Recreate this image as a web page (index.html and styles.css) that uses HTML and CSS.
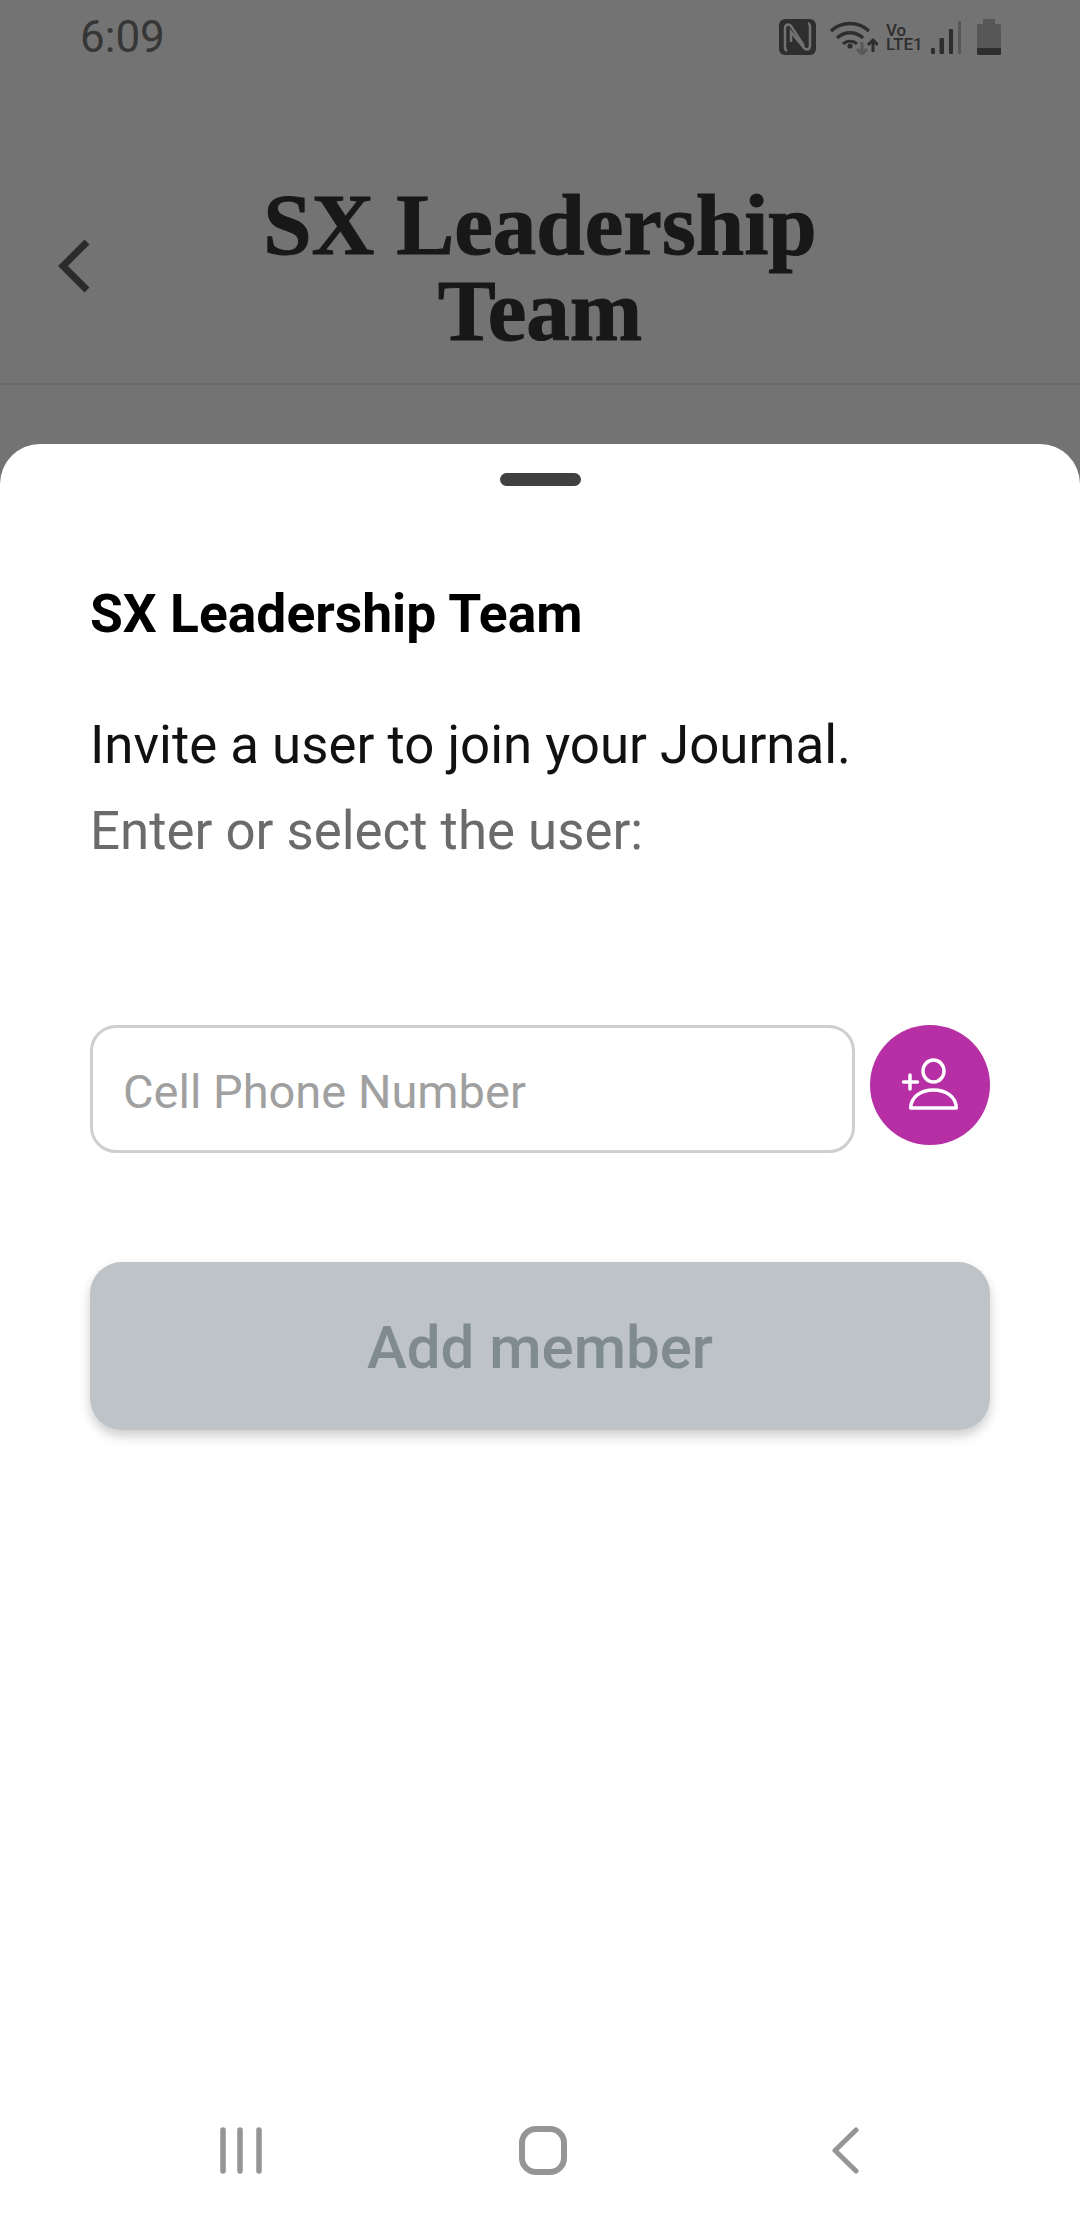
FILE: index.html
```html
<!DOCTYPE html>
<html lang="en">
<head>
    <meta charset="UTF-8">
    <meta name="viewport" content="width=device-width, initial-scale=1.0">
    <title>SX Leadership Team</title>
    <link rel="stylesheet" href="styles.css">
</head>
<body>
<div class="screen">
    <div class="status-bar">
        <span class="time">6:09</span>
        <div class="status-icons">
            <svg class="icon-nfc" width="37" height="36" viewBox="0 0 37 36">
                <rect width="37" height="36" rx="6" fill="#2e2e2e"/>
                <path d="M8 32C6 31 6 30 6 28V9C6 6 9 4 12 7L25 27" fill="none" stroke="#737373" stroke-width="2.5"/>
                <path d="M29 4C31 5 31 6 31 8V27C31 30 28 32 25 29L12 13V23" fill="none" stroke="#737373" stroke-width="2.5"/>
            </svg>
            <svg class="icon-wifi" width="48" height="35" viewBox="0 0 48 35">
                <path d="M1 11a28 28 0 0 1 38 0" fill="none" stroke="#2e2e2e" stroke-width="3.5"/>
                <path d="M7 18a19 19 0 0 1 26 0" fill="none" stroke="#2e2e2e" stroke-width="3.5"/>
                <path d="M13 24a10 10 0 0 1 14 0" fill="none" stroke="#2e2e2e" stroke-width="3"/>
                <circle cx="20" cy="26" r="2.6" fill="#2e2e2e"/>
                <path d="M32 22v12M27 29l5 5 5-5" fill="none" stroke="#575757" stroke-width="3"/>
                <path d="M43 32V20M38 25l5-5 5 5" fill="none" stroke="#2e2e2e" stroke-width="3"/>
            </svg>
            <div class="volte"><span>Vo</span><span>LTE1</span></div>
            <svg class="icon-signal" width="30" height="33" viewBox="0 0 30 33">
                <rect x="0" y="27" width="4" height="6" rx="1" fill="#2e2e2e"/>
                <rect x="8.5" y="17" width="4.5" height="16" rx="1" fill="#2e2e2e"/>
                <rect x="18" y="8" width="4" height="25" rx="1" fill="#2e2e2e"/>
                <rect x="27" y="0" width="3" height="33" rx="1" fill="#575757"/>
            </svg>
            <svg class="icon-battery" width="24" height="36" viewBox="0 0 24 36">
                <path d="M6 0h12v5h5a1 1 0 0 1 1 1v23H0V6a1 1 0 0 1 1-1h5z" fill="#575757"/>
                <path d="M0 29h24v6a1 1 0 0 1-1 1H1a1 1 0 0 1-1-1z" fill="#2e2e2e"/>
            </svg>
        </div>
    </div>

    <header class="page-header">
        <svg class="back-icon" width="32" height="54" viewBox="0 0 32 54">
            <path d="M29 3 5 27l24 24" fill="none" stroke="#2b2b2b" stroke-width="7"/>
        </svg>
        <h1>SX Leadership<br>Team</h1>
    </header>

    <section class="sheet">
        <div class="handle"></div>
        <h2>SX Leadership Team</h2>
        <p class="invite">Invite a user to join your Journal.</p>
        <p class="hint">Enter or select the user:</p>

        <div class="phone-row">
            <input class="phone-input" type="tel" placeholder="Cell Phone Number">
            <button class="contact-btn" type="button" aria-label="Select contact">
                <svg width="60" height="54" viewBox="0 0 60 54">
                    <ellipse cx="33.5" cy="13" rx="10.5" ry="11" fill="none" stroke="#fff" stroke-width="3.5"/>
                    <path d="M10.75 50c0-11 10-18 22.75-18s22.75 7 22.75 18z" fill="none" stroke="#fff" stroke-width="3.5" stroke-linejoin="round"/>
                    <path d="M3.5 24h14M10 17v14" fill="none" stroke="#fff" stroke-width="3.5" stroke-linecap="round"/>
                </svg>
            </button>
        </div>

        <button class="add-btn" type="button">Add member</button>

        <nav class="nav-bar">
            <svg width="42" height="47" viewBox="0 0 42 47">
                <path d="M3 3v41M20 3v41M39 3v41" fill="none" stroke="#959595" stroke-width="5.5" stroke-linecap="round"/>
            </svg>
            <svg width="48" height="49" viewBox="0 0 48 49">
                <rect x="3" y="3" width="42" height="43" rx="14" fill="none" stroke="#959595" stroke-width="6"/>
            </svg>
            <svg width="27" height="47" viewBox="0 0 27 47">
                <path d="M24 3 3 23.5 24 44" fill="none" stroke="#959595" stroke-width="5" stroke-linecap="round" stroke-linejoin="round"/>
            </svg>
        </nav>
    </section>
</div>
</body>
</html>
```

FILE: styles.css
```css
* {
    box-sizing: border-box;
}

html,
body {
    margin: 0;
    padding: 0;
}

body {
    font-family: Roboto, "Liberation Sans", sans-serif;
    background-color: #737373;
}

.screen {
    width: 1080px;
    height: 2220px;
    display: flex;
    flex-direction: column;
    overflow: hidden;
    background-color: #737373;
}

.status-bar {
    height: 74px;
    padding: 0 79px 0 80px;
    display: flex;
    align-items: center;
    justify-content: space-between;
}

.time {
    font-size: 44px;
    color: #363636;
}

.status-icons {
    display: flex;
    align-items: center;
}

.icon-wifi {
    margin-left: 14px;
}

.volte {
    width: 36px;
    margin-left: 8px;
    display: flex;
    flex-direction: column;
    font-size: 17px;
    line-height: 14px;
    font-weight: 500;
    white-space: nowrap;
    color: #2e2e2e;
}

.icon-signal {
    margin-left: 9px;
}

.icon-battery {
    margin-left: 16px;
}

.page-header {
    height: 311px;
    padding: 74px 0 0 58px;
    display: flex;
    align-items: center;
    position: relative;
    border-bottom: 2px solid #696969;
}

.page-header h1 {
    position: absolute;
    left: 0;
    right: 0;
    top: 108px;
    margin: 0;
    font-family: "Liberation Serif", serif;
    font-size: 87px;
    line-height: 86px;
    font-weight: 700;
    text-align: center;
    color: #181818;
    -webkit-text-stroke: 1px #181818;
}

.sheet {
    flex: 1;
    margin-top: 59px;
    padding: 29px 90px 0;
    display: flex;
    flex-direction: column;
    background-color: #fff;
    border-radius: 40px 40px 0 0;
}

.handle {
    width: 81px;
    height: 13px;
    align-self: center;
    border-radius: 7px;
    background-color: #404040;
}

.sheet h2 {
    margin: 98px 0 0;
    font-size: 53.4px;
    line-height: 60px;
    font-weight: 700;
    color: #000;
}

.invite {
    margin: 71px 0 0;
    font-size: 52.8px;
    line-height: 60px;
    color: #111;
}

.hint {
    margin: 26px 0 0;
    font-size: 52.8px;
    line-height: 60px;
    color: #6b6b6b;
}

.phone-row {
    margin-top: 164px;
    display: flex;
    align-items: flex-start;
    gap: 15px;
}

.phone-input {
    width: 765px;
    height: 128px;
    padding: 4px 30px 0;
    border: 3px solid #cfcfcf;
    border-radius: 26px;
    font-family: inherit;
    font-size: 47px;
    color: #333;
    background-color: #fff;
}

.phone-input::placeholder {
    color: #a0a0a0;
}

.contact-btn {
    width: 120px;
    height: 120px;
    padding: 0;
    border: none;
    border-radius: 50%;
    display: flex;
    align-items: center;
    justify-content: center;
    background-color: #b62fa4;
}

.add-btn {
    height: 168px;
    margin-top: 109px;
    padding: 3px 0 0;
    border: none;
    border-radius: 32px;
    font-family: inherit;
    font-size: 60px;
    font-weight: 500;
    color: #7f8b8c;
    background-color: #bdc3c7;
    box-shadow: 0 6px 12px rgba(0, 0, 0, 0.2);
}

.nav-bar {
    height: 49px;
    margin: auto -90px 45px;
    display: flex;
    align-items: center;
}

.nav-bar svg:nth-child(1) {
    margin-left: 220px;
}

.nav-bar svg:nth-child(2) {
    margin-left: 257px;
}

.nav-bar svg:nth-child(3) {
    margin-left: 265px;
}
```
